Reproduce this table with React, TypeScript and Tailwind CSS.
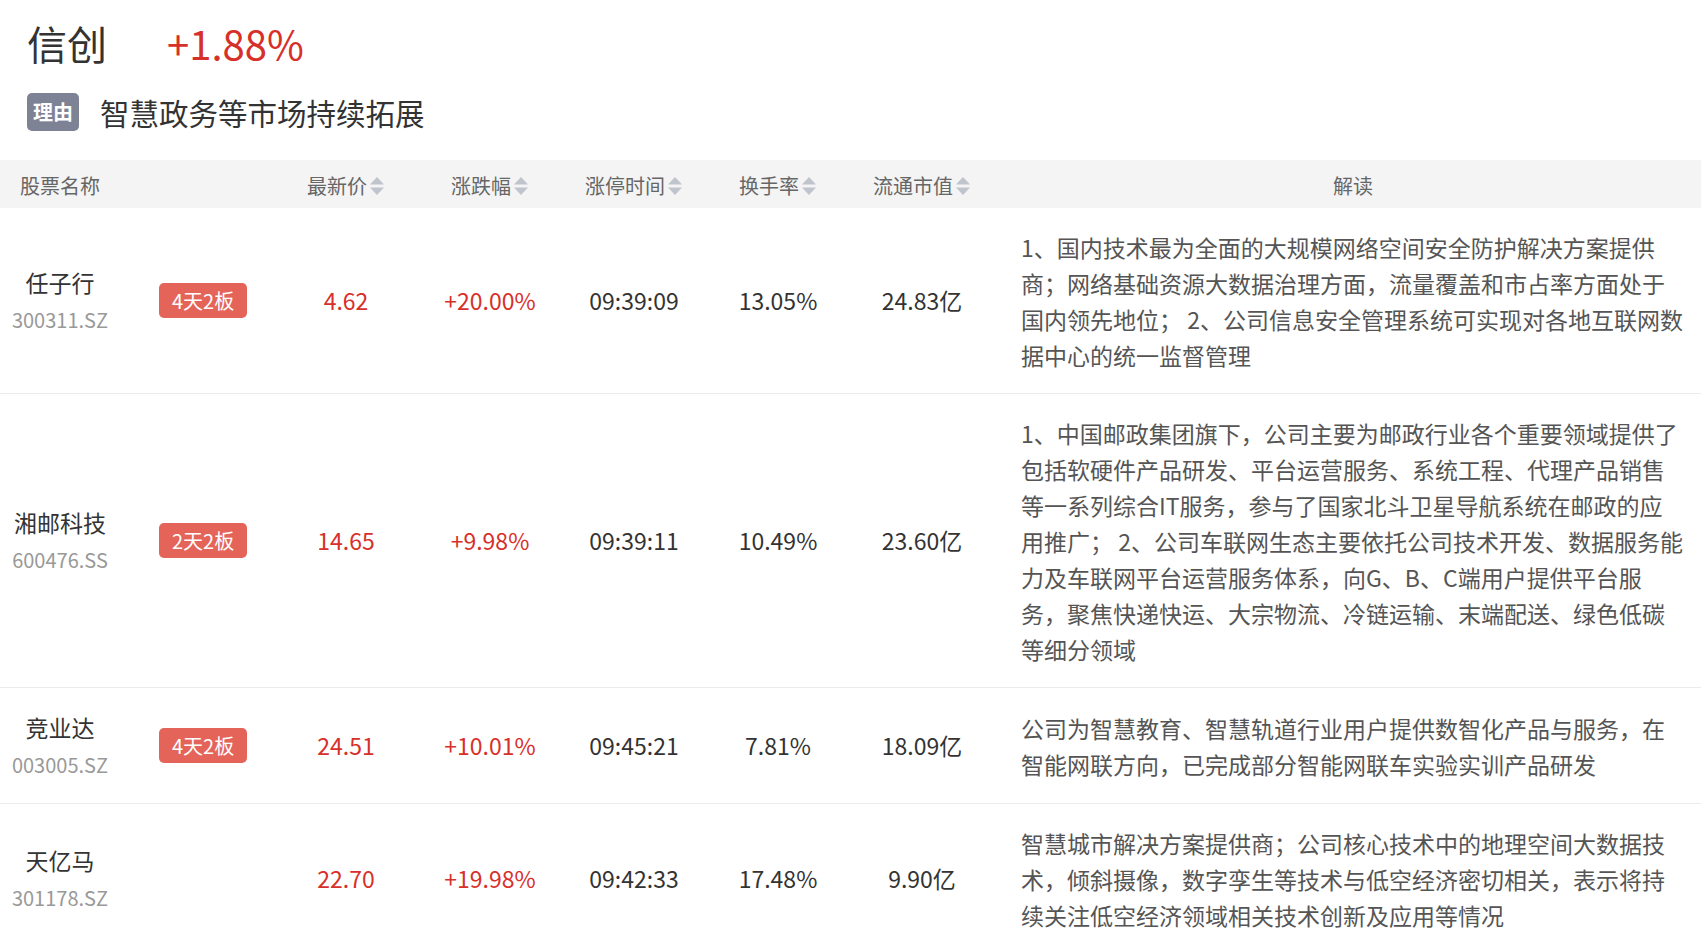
import React from "react";

const SortIcon = () => (
  <svg width="16" height="24" viewBox="0 0 16 24" className="ml-[2px] shrink-0">
    <path d="M8 3 L15 10.5 H1 Z" fill="#c0c4cc" />
    <path d="M1 13.5 H15 L8 21 Z" fill="#c0c4cc" />
  </svg>
);

type Row = {
  name: string;
  code: string;
  badge?: string;
  price: string;
  change: string;
  time: string;
  turnover: string;
  cap: string;
  desc: string[];
};

const rows: Row[] = [
  {
    name: "任子行",
    code: "300311.SZ",
    badge: "4天2板",
    price: "4.62",
    change: "+20.00%",
    time: "09:39:09",
    turnover: "13.05%",
    cap: "24.83亿",
    desc: [
      "1、国内技术最为全面的大规模网络空间安全防护解决方案提供",
      "商；网络基础资源大数据治理方面，流量覆盖和市占率方面处于",
      "国内领先地位； 2、公司信息安全管理系统可实现对各地互联网数",
      "据中心的统一监督管理",
    ],
  },
  {
    name: "湘邮科技",
    code: "600476.SS",
    badge: "2天2板",
    price: "14.65",
    change: "+9.98%",
    time: "09:39:11",
    turnover: "10.49%",
    cap: "23.60亿",
    desc: [
      "1、中国邮政集团旗下，公司主要为邮政行业各个重要领域提供了",
      "包括软硬件产品研发、平台运营服务、系统工程、代理产品销售",
      "等一系列综合IT服务，参与了国家北斗卫星导航系统在邮政的应",
      "用推广； 2、公司车联网生态主要依托公司技术开发、数据服务能",
      "力及车联网平台运营服务体系，向G、B、C端用户提供平台服",
      "务，聚焦快递快运、大宗物流、冷链运输、末端配送、绿色低碳",
      "等细分领域",
    ],
  },
  {
    name: "竞业达",
    code: "003005.SZ",
    badge: "4天2板",
    price: "24.51",
    change: "+10.01%",
    time: "09:45:21",
    turnover: "7.81%",
    cap: "18.09亿",
    desc: [
      "公司为智慧教育、智慧轨道行业用户提供数智化产品与服务，在",
      "智能网联方向，已完成部分智能网联车实验实训产品研发",
    ],
  },
  {
    name: "天亿马",
    code: "301178.SZ",
    price: "22.70",
    change: "+19.98%",
    time: "09:42:33",
    turnover: "17.48%",
    cap: "9.90亿",
    desc: [
      "智慧城市解决方案提供商；公司核心技术中的地理空间大数据技",
      "术，倾斜摄像，数字孪生等技术与低空经济密切相关，表示将持",
      "续关注低空经济领域相关技术创新及应用等情况",
    ],
  },
];

const headers = ["最新价", "涨跌幅", "涨停时间", "换手率", "流通市值"];

export default function App() {
  return (
    <div
      className="w-[1701px] min-h-[951px] bg-white overflow-hidden"
      style={{ fontFamily: '"Noto Sans CJK SC", "Noto Sans", sans-serif' }}
    >
      <div className="px-[27px] pt-[19px]">
        <div className="flex items-center h-[48px] gap-[60px]">
          <span className="text-[40px] leading-[48px] text-[#333333]">信创</span>
          <span className="text-[40px] leading-[48px] text-[#d7302a]">+1.88%</span>
        </div>
        <div className="flex items-center mt-[26px] gap-[21px]">
          <span className="w-[52px] h-[38px] rounded-[5px] bg-[#7e8295] text-white text-[20px] leading-[38px] text-center font-bold">
            理由
          </span>
          <span className="text-[29.5px] leading-[38px] text-[#333333]">智慧政务等市场持续拓展</span>
        </div>
      </div>

      <div className="mt-[29px]">
        <div className="grid grid-cols-[120px_154px_144px_144px_144px_144px_144px_1fr] h-[48px] pt-[3px] bg-[#f4f4f5] items-center text-[20px] text-[#666666]">
          <div className="col-span-2 pl-[20px]">股票名称</div>
          {headers.map((h) => (
            <div key={h} className="flex items-center justify-center">
              <span>{h}</span>
              <SortIcon />
            </div>
          ))}
          <div className="pl-[27px] pr-[16px] text-center">解读</div>
        </div>

        {rows.map((r) => (
          <div
            key={r.code}
            className="grid grid-cols-[120px_154px_144px_144px_144px_144px_144px_1fr] items-center min-h-[116px] border-b border-[#ebebeb]"
          >
            <div className="flex flex-col items-center">
              <span className="text-[23px] leading-[38px] text-[#333333]">{r.name}</span>
              <span className="text-[20px] leading-[38px] text-[#999999]">{r.code}</span>
            </div>
            <div className="pl-[39px]">
              {r.badge && (
                <span className="inline-block h-[35px] px-[13px] rounded-[5px] bg-[#e4645a] text-white text-[20px] leading-[35px]">
                  {r.badge}
                </span>
              )}
            </div>
            <div className="text-center text-[23px] text-[#d7302a]">{r.price}</div>
            <div className="text-center text-[23px] text-[#d7302a]">{r.change}</div>
            <div className="text-center text-[23px] text-[#333333]">{r.time}</div>
            <div className="text-center text-[23px] text-[#333333]">{r.turnover}</div>
            <div className="text-center text-[23px] text-[#333333]">{r.cap}</div>
            <div className="pl-[27px] pr-[16px] pt-[21px] pb-[20px] text-[23px] leading-[36px] text-[#555555]">
              {r.desc.map((l, i) => (
                <div key={i} className="whitespace-nowrap">
                  {l}
                </div>
              ))}
            </div>
          </div>
        ))}
      </div>
    </div>
  );
}
